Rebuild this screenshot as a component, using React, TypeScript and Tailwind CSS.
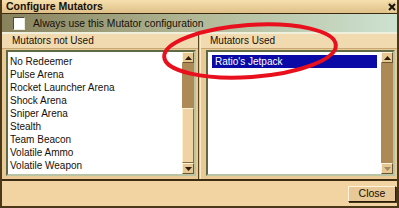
const notUsed = [
  'No Redeemer',
  'Pulse Arena',
  'Rocket Launcher Arena',
  'Shock Arena',
  'Sniper Arena',
  'Stealth',
  'Team Beacon',
  'Volatile Ammo',
  'Volatile Weapon',
];

const used = ["Ratio's Jetpack"];

function Arrow({ dir, faded }: { dir: 'up' | 'down'; faded?: boolean }) {
  return (
    <div className="flex h-[11px] w-full items-center justify-center border border-t-[#fff3d8] border-l-[#fff3d8] border-r-[#6b5430] border-b-[#6b5430] bg-[#e6c792]">
      <svg width="7" height="4" viewBox="0 0 7 4">
        <path
          d={dir === 'up' ? 'M0 4 L3.5 0 L7 4 Z' : 'M0 0 L3.5 4 L7 0 Z'}
          fill={faded ? '#9c8a68' : '#2a1c08'}
        />
      </svg>
    </div>
  );
}

function ScrollBar({ thumb }: { thumb?: boolean }) {
  return (
    <div className="flex w-[12px] flex-col bg-[#ad8a55]">
      <Arrow dir="up" />
      <div className="flex flex-1 flex-col justify-end">
        {thumb && (
          <div className="h-[55px] border border-t-[#fff0d0] border-l-[#fff0d0] border-r-[#8a6c40] border-b-[#8a6c40] bg-[#f0d3a2]" />
        )}
      </div>
      <Arrow dir="down" faded={!thumb} />
    </div>
  );
}

function ListBox({ items, selected, width }: { items: string[]; selected?: number; width: string }) {
  return (
    <div className={`flex h-[126px] border-2 border-t-[#5f6a44] border-l-[#5f6a44] border-r-[#b8c4a4] border-b-[#b8c4a4] ${width}`}>
      <div className="flex-1 bg-white pt-[3px]">
        {items.map((item, i) => (
          <div
            key={item}
            className={
              i === selected
                ? 'mx-[4px] h-[13px] bg-[#0a0aa6] pl-[3px] leading-[13px] text-white'
                : 'h-[13px] pl-[2px] leading-[13px]'
            }
          >
            {item}
          </div>
        ))}
      </div>
      <ScrollBar thumb={selected === undefined} />
    </div>
  );
}

export default function App() {
  return (
    <div className="relative h-[208px] w-[399px] overflow-hidden bg-[#e9c995] font-['Liberation_Sans',Arial,sans-serif] text-[10px] text-[#161008]">
      <div className="flex h-full flex-col border-x-2 border-b-2 border-[#4a3818]">
        {/* Title bar */}
        <div className="flex h-[14px] items-center justify-between border-b border-[#3a2a10] bg-gradient-to-b from-[#f6e0ae] to-[#dfc088] pl-[4px] pr-[1px]">
          <span className="text-[10.5px] font-bold leading-[13px]">Configure Mutators</span>
          <div className="flex h-[10px] w-[9px] items-center justify-center bg-[#e8cf9c]">
            <svg width="8" height="8" viewBox="0 0 8 8">
              <path d="M1 1 L7 7 M7 1 L1 7" stroke="#1a1208" strokeWidth="2" />
            </svg>
          </div>
        </div>

        {/* Checkbox row */}
        <div className="flex h-[20px] items-center border-b-2 border-[#eef0dc] bg-gradient-to-r from-[#88825c] via-[#b2b998] to-[#cde2d0]">
          <div className="ml-[11px] h-[13px] w-[12px] border border-t-[#4c4a38] border-l-[#4c4a38] border-r-[#e8ecdc] border-b-[#e8ecdc] bg-white" />
          <span className="ml-[8px] text-[10.3px] leading-[13px]">Always use this Mutator configuration</span>
        </div>

        {/* Panes */}
        <div className="flex flex-1">
          <div className="flex w-[196px] flex-col">
            <div className="h-[15px] border-b border-[#c8a872] bg-[#f2dab0] pl-[10px] leading-[14px]">Mutators not Used</div>
            <div className="pl-[4px] pt-[1px]">
              <ListBox items={notUsed} width="w-[190px]" />
            </div>
          </div>
          <div className="flex w-[3px] flex-col">
            <div className="flex-1 border-l border-r border-l-[#5a4420] border-r-[#fbe8c4] bg-[#e6c48e]" />
          </div>
          <div className="flex flex-1 flex-col">
            <div className="h-[15px] border-b border-[#c8a872] bg-[#f2dab0] pl-[9px] leading-[14px]">Mutators Used</div>
            <div className="pl-[5px] pt-[1px]">
              <ListBox items={used} selected={0} width="w-[189px]" />
            </div>
          </div>
        </div>

        {/* Bottom bar */}
        <div className="flex h-[27px] items-center justify-end border-t-2 border-[#3c2c12] bg-[#f2d4a2] pr-[1px]">
          <button className="h-[16px] w-[48px] border border-t-[#fff4dc] border-l-[#fff4dc] border-r-[#2a1c08] border-b-[#2a1c08] bg-[#e8c896] text-[10.5px] leading-[13px] shadow-[1px_1px_0_#4a3818]">
            Close
          </button>
        </div>
      </div>

      {/* Red annotation ellipse */}
      <svg className="pointer-events-none absolute inset-0" width="399" height="208" viewBox="0 0 399 208">
        <ellipse
          cx="250"
          cy="51"
          rx="86"
          ry="26"
          transform="rotate(-4 250 51)"
          fill="none"
          stroke="#e8101c"
          strokeWidth="4"
        />
      </svg>
    </div>
  );
}
